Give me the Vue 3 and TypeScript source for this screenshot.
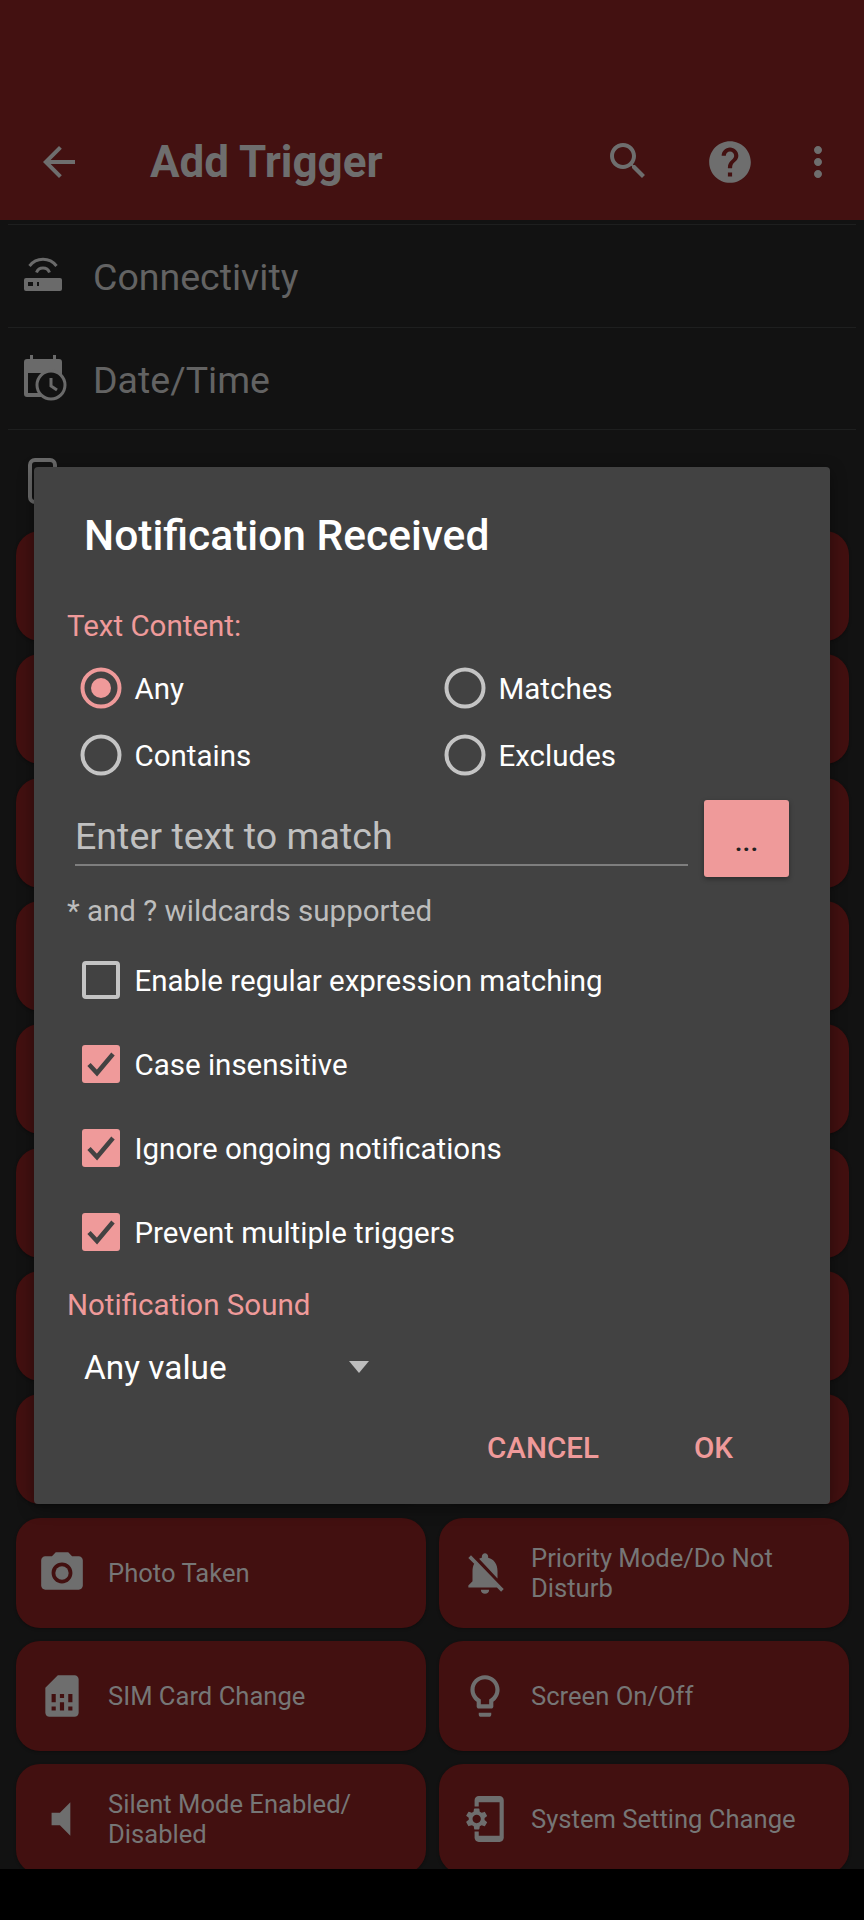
<script setup lang="ts">
interface Card { label: string; path?: string; circle?: boolean }

const camera = 'M9 2L7.17 4H4c-1.1 0-2 .9-2 2v12c0 1.1.9 2 2 2h16c1.1 0 2-.9 2-2V6c0-1.1-.9-2-2-2h-3.17L15 2H9zm3 15c-2.76 0-5-2.24-5-5s2.24-5 5-5 5 2.24 5 5-2.24 5-5 5z'
const bellOff = 'M20 18.69L7.84 6.14 5.27 3.49 4 4.76l2.8 2.8v.01c-.52.99-.8 2.16-.8 3.42v5l-2 2v1h13.73l2 2L21 19.72l-1-1.03zM12 22c1.11 0 2-.89 2-2h-4c0 1.11.89 2 2 2zm6-7.32V11c0-3.08-1.64-5.64-4.5-6.32V4c0-.83-.67-1.5-1.5-1.5s-1.5.67-1.5 1.5v.68c-.15.03-.29.08-.42.12-.1.03-.2.07-.3.11h-.01c-.2.08-.4.17-.59.27-.01 0-.01 0-.02.01L18 14.68z'
const sim = 'M19.99 4c0-1.1-.89-2-1.99-2h-8L4 8v12c0 1.1.9 2 2 2h12c1.1 0 2-.9 2-2l-.01-16zM9 19H7v-2h2v2zm8 0h-2v-2h2v2zm-8-4H7v-4h2v4zm4 4h-2v-4h2v4zm0-6h-2v-2h2v2zm4 2h-2v-4h2v4z'
const bulb = 'M9 21c0 .55.45 1 1 1h4c.55 0 1-.45 1-1v-1H9v1zm3-19C8.14 2 5 5.14 5 9c0 2.38 1.19 4.47 3 5.74V17c0 .55.45 1 1 1h6c.55 0 1-.45 1-1v-2.26c1.81-1.27 3-3.36 3-5.74 0-3.86-3.14-7-7-7zm2.85 11.1l-.85.6V16h-4v-2.3l-.85-.6C7.8 12.16 7 10.63 7 9c0-2.76 2.24-5 5-5s5 2.24 5 5c0 1.63-.8 3.16-2.15 4.1z'
const mute = 'M7 9v6h4l5 5V4l-5 5H7z'
const setup = 'M11.8 12.5v-1l1.1-.8c.1-.1.1-.2.1-.3l-1-1.7c-.1-.1-.2-.2-.3-.1l-1.3.4c-.3-.2-.6-.4-.9-.5l-.2-1.3c0-.1-.1-.2-.3-.2H7c-.1 0-.2.1-.3.2l-.2 1.3c-.3.1-.6.3-.9.5l-1.3-.5c-.1 0-.2 0-.3.1l-1 1.7c-.1.1 0 .2.1.3l1.1.8v1l-1.1.8c-.1.2-.1.3-.1.4l1 1.7c.1.1.2.2.3.1l1.4-.4c.3.2.6.4.9.5l.2 1.3c0 .1.1.2.2.2h2c.1 0 .2-.1.3-.2l.2-1.3c.3-.1.6-.3.9-.5l1.3.5c.1 0 .2 0 .3-.1l1-1.7c.1-.1 0-.2-.1-.3l-1.1-.9zM8 14c-1.1 0-2-.9-2-2s.9-2 2-2 2 .9 2 2-.9 2-2 2zM19 1H9c-1.1 0-2 .9-2 2v3h2V4h10v16H9v-2H7v3c0 1.1.9 2 2 2h10c1.1 0 2-.9 2-2V3c0-1.1-.9-2-2-2z'

const hidden: Card[] = Array.from({ length: 16 }, () => ({ label: '' }))
const cards: Card[] = [
  ...hidden,
  { label: 'Photo Taken', path: camera, circle: true },
  { label: 'Priority Mode/Do Not Disturb', path: bellOff },
  { label: 'SIM Card Change', path: sim },
  { label: 'Screen On/Off', path: bulb },
  { label: 'Silent Mode Enabled/ Disabled', path: mute },
  { label: 'System Setting Change', path: setup },
]
const radios = [
  { label: 'Any', on: true },
  { label: 'Matches', on: false },
  { label: 'Contains', on: false },
  { label: 'Excludes', on: false },
]
const checks = [
  { label: 'Enable regular expression matching', on: false },
  { label: 'Case insensitive', on: true },
  { label: 'Ignore ongoing notifications', on: true },
  { label: 'Prevent multiple triggers', on: true },
]
</script>

<template>
  <div class="page">
    <div class="content">
      <header class="appbar">
        <svg class="tb back" viewBox="0 0 24 24"><path d="M20 11H7.83l5.59-5.59L12 4l-8 8 8 8 1.41-1.41L7.83 13H20v-2z" /></svg>
        <span class="tb-title">Add Trigger</span>
        <svg class="tb search" viewBox="0 0 24 24"><path d="M15.5 14h-.79l-.28-.27C15.41 12.59 16 11.11 16 9.5 16 5.91 13.09 3 9.5 3S3 5.91 3 9.5 5.91 16 9.5 16c1.61 0 3.09-.59 4.23-1.57l.27.28v.79l5 4.99L20.49 19l-4.99-5zm-6 0C7.01 14 5 11.99 5 9.5S7.01 5 9.5 5 14 7.01 14 9.5 11.99 14 9.5 14z" /></svg>
        <svg class="tb help" viewBox="0 0 24 24"><path d="M12 2C6.48 2 2 6.48 2 12s4.48 10 10 10 10-4.48 10-10S17.52 2 12 2zm1 17h-2v-2h2v2zm2.07-7.75l-.9.92C13.45 12.9 13 13.5 13 15h-2v-.5c0-1.1.45-2.1 1.17-2.83l1.24-1.26c.37-.36.59-.86.59-1.41 0-1.1-.9-2-2-2s-2 .9-2 2H8c0-2.21 1.79-4 4-4s4 1.79 4 4c0 .88-.36 1.68-.93 2.25z" /></svg>
        <svg class="tb more" viewBox="0 0 24 24"><path d="M12 8c1.1 0 2-.9 2-2s-.9-2-2-2-2 .9-2 2 .9 2 2 2zm0 2c-1.1 0-2 .9-2 2s.9 2 2 2 2-.9 2-2-.9-2-2-2zm0 6c-1.1 0-2 .9-2 2s.9 2 2 2 2-.9 2-2-.9-2-2-2z" /></svg>
      </header>

      <section class="cats">
        <div class="cat">
          <svg class="cat-ico" viewBox="0 0 44 48">
            <path d="M5.5 14 A17 17 0 0 1 32.5 14" class="arc" />
            <path d="M12.5 20.5 A7 7 0 0 1 25.5 20.5" class="arc" />
            <path fill-rule="evenodd" d="M2 26H36a2 2 0 0 1 2 2V37a2 2 0 0 1-2 2H2a2 2 0 0 1-2-2V28a2 2 0 0 1 2-2ZM4 30V34H9V30ZM13 30V34H15V30Z" />
          </svg>
          <span class="cat-text">Connectivity</span>
        </div>
        <div class="cat">
          <svg class="cat-ico" viewBox="0 0 44 48">
            <path fill-rule="evenodd" d="M6 1H9V5H29V1H32V5H35a3 3 0 0 1 3 3V40a3 3 0 0 1-3 3H3a3 3 0 0 1-3-3V8a3 3 0 0 1 3-3H6ZM4 19V39H34V19Z" />
            <circle cx="27" cy="31" r="14" class="clock" />
            <path d="M27 24V32L33 36" class="hand" />
          </svg>
          <span class="cat-text">Date/Time</span>
        </div>
        <div class="cat">
          <svg class="cat-ico" viewBox="0 0 44 48">
            <rect x="6" y="3" width="25" height="42" rx="5" class="phone" />
          </svg>
          <span class="cat-text">Device Events</span>
        </div>
      </section>

      <section class="grid">
        <div v-for="(c, i) in cards" :key="i" class="card">
          <svg v-if="c.path" class="card-ico" viewBox="0 0 24 24">
            <path :d="c.path" />
            <circle v-if="c.circle" cx="12" cy="12" r="3.2" />
          </svg>
          <span v-if="c.label" class="card-text">{{ c.label }}</span>
        </div>
      </section>
    </div>
    <div class="navbar"></div>

    <div class="dialog">
      <h2 class="d-title">Notification Received</h2>
      <div class="d-label first">Text Content:</div>
      <div class="radios">
        <div v-for="r in radios" :key="r.label" class="radio">
          <svg class="radio-ico" viewBox="0 0 42 42">
            <circle cx="21" cy="21" r="18.5" :class="r.on ? 'ring-on' : 'ring-off'" />
            <circle v-if="r.on" cx="21" cy="21" r="10" class="dot" />
          </svg>
          <span class="opt-text">{{ r.label }}</span>
        </div>
      </div>
      <div class="field-row">
        <div class="field">Enter text to match</div>
        <div class="more-btn">...</div>
      </div>
      <div class="hint">* and ? wildcards supported</div>
      <div class="checks">
        <div v-for="c in checks" :key="c.label" class="check">
          <svg class="check-ico" viewBox="0 0 38 38">
            <rect v-if="c.on" width="38" height="38" rx="3" class="box-on" />
            <rect v-else x="2" y="2" width="34" height="34" rx="2" class="box-off" />
            <path v-if="c.on" d="M7 19.5L15 28L31 9" class="tick" />
          </svg>
          <span class="opt-text">{{ c.label }}</span>
        </div>
      </div>
      <div class="d-label sound">Notification Sound</div>
      <div class="select">
        <span>Any value</span>
        <span class="caret"></span>
      </div>
      <div class="actions">
        <span class="act cancel">CANCEL</span>
        <span class="act ok">OK</span>
      </div>
    </div>
  </div>
</template>

<style>
html, body { margin: 0; background: #000; }
</style>

<style scoped>
.page {
  position: relative;
  width: 864px;
  height: 1920px;
  display: flex;
  flex-direction: column;
  overflow: hidden;
  background: #121212;
  font-family: Roboto, "Noto Sans", sans-serif;
}
.content { flex: 1; min-height: 0; overflow: hidden; }
.navbar { height: 51px; background: #000; flex: none; }

.appbar {
  height: 116px;
  padding-top: 104px;
  background: #431111;
  display: flex;
  align-items: center;
  color: #6e6e6e;
}
.tb { fill: #6e6e6e; flex: none; }
.back { width: 48px; height: 48px; margin-left: 35px; }
.tb-title { margin-left: 67px; font-size: 44px; font-weight: 700; color: #6e6e6e; }
.search { width: 48px; height: 48px; margin-left: auto; margin-top: -3px; }
.help { width: 50px; height: 50px; margin-left: 53px; }
.more { width: 48px; height: 48px; margin-left: 39px; margin-right: 22px; }

.cats { height: 311px; padding-top: 4px; box-sizing: border-box; }
.cat {
  margin: 0 8px;
  height: 102.5px;
  box-sizing: border-box;
  border-top: 1.5px solid #1e1f1f;
  display: flex;
  align-items: center;
  padding-left: 16px;
  font-size: 37.5px;
  color: #636363;
}
.cat-ico { width: 44px; height: 48px; fill: #6a6a6a; flex: none; margin-right: 25px; }
.cat-text { margin-top: 3px; }
.arc { fill: none; stroke: #6a6a6a; stroke-width: 3; }
.clock { fill: #121212; stroke: #6a6a6a; stroke-width: 3; }
.hand { fill: none; stroke: #6a6a6a; stroke-width: 3; }
.phone { fill: none; stroke: #6a6a6a; stroke-width: 4; }

.grid {
  display: grid;
  grid-template-columns: 1fr 1fr;
  grid-auto-rows: 110px;
  column-gap: 13.5px;
  row-gap: 13.33px;
  padding: 0 15.5px 0 16px;
}
.card {
  background: #421010;
  border-radius: 24px;
  display: flex;
  align-items: center;
  padding-left: 21px;
  box-sizing: border-box;
  box-shadow: 0 1px 3px rgba(0, 0, 0, 0.3);
}
.card-ico { width: 50px; height: 50px; fill: #6e6e6e; flex: none; margin-right: 21px; }
.card-text { font-size: 25.6px; line-height: 30px; color: #767676; padding-right: 40px; }

.dialog {
  position: absolute;
  left: 34px;
  top: 467px;
  width: 796px;
  height: 1037px;
  background: #424242;
  border-radius: 4px;
  box-shadow: 0 4px 16px rgba(0, 0, 0, 0.4);
  box-sizing: border-box;
  color: #fff;
  padding-top: 49px;
}
.d-title { margin: 0 0 0 50px; font-size: 42.5px; line-height: 40px; font-weight: 500; color: #fff; }
.d-label { margin-left: 33px; font-size: 29.5px; line-height: 34px; color: #ef9a9a; }
.first { margin-top: 53px; }
.radios {
  margin-top: 11px;
  display: grid;
  grid-template-columns: 364px 1fr;
  grid-auto-rows: 67px;
  padding-left: 46px;
}
.radio { display: flex; align-items: center; font-size: 29.5px; color: #fff; }
.radio-ico { width: 42px; height: 42px; margin-right: 12.5px; flex: none; }
.opt-text { margin-top: 2px; }
.ring-on { fill: none; stroke: #ef9a9a; stroke-width: 4; }
.ring-off { fill: none; stroke: #c4c4c4; stroke-width: 4; }
.dot { fill: #ef9a9a; }

.field-row { margin-top: 12px; margin-left: 41px; display: flex; align-items: flex-start; gap: 16px; }
.field {
  width: 613px;
  height: 66px;
  box-sizing: border-box;
  border-bottom: 2px solid #7e7e7e;
  font-size: 37.6px;
  line-height: 72px;
  color: #c0c0c0;
}
.more-btn {
  width: 85px;
  height: 77px;
  background: #ef9a9a;
  border-radius: 3px;
  box-shadow: 0 2px 5px rgba(0, 0, 0, 0.35);
  color: #222;
  font-size: 28px;
  font-weight: 500;
  text-align: center;
  line-height: 84px;
}
.hint { margin: 17px 0 0 33px; font-size: 29.5px; line-height: 34px; color: #bdbdbd; }
.checks { margin-top: 10px; padding-left: 48px; }
.check { height: 84px; display: flex; align-items: center; font-size: 29.5px; color: #fff; }
.check-ico { width: 38px; height: 38px; margin-right: 14.5px; flex: none; }
.box-on { fill: #ef9a9a; }
.box-off { fill: none; stroke: #c4c4c4; stroke-width: 4; }
.tick { fill: none; stroke: #424242; stroke-width: 4.5; }
.sound { margin-top: 14px; }
.select { margin: 20px 0 0 50px; height: 50px; display: flex; align-items: center; font-size: 33.4px; color: #fff; }
.caret {
  margin-left: 122px;
  width: 0;
  height: 0;
  border-left: 10px solid transparent;
  border-right: 10px solid transparent;
  border-top: 12px solid #bdbdbd;
}
.actions { margin-top: 36px; height: 40px; display: flex; align-items: center; padding-left: 453px; }
.act { font-size: 29.6px; font-weight: 500; color: #ef9a9a; }
.ok { margin-left: 95px; }
</style>
